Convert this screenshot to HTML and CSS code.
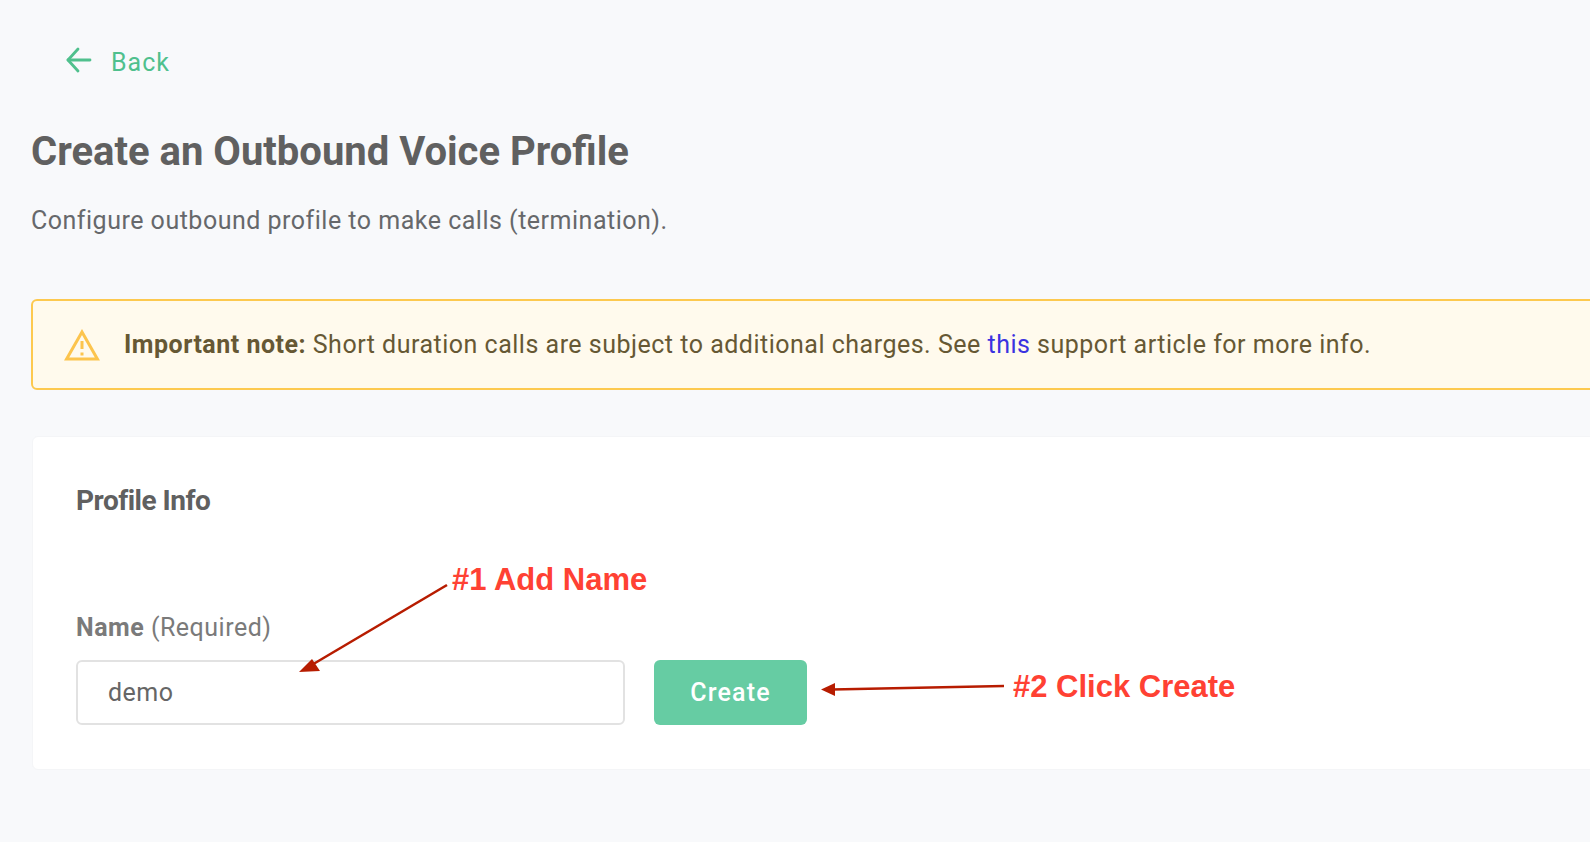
FILE: index.html
```html
<!DOCTYPE html>
<html lang="en">
<head>
    <meta charset="UTF-8">
    <meta name="viewport" content="width=device-width, initial-scale=1.0">
    <title>Create an Outbound Voice Profile</title>
    <link rel="stylesheet" href="styles.css">
</head>
<body>
    <div class="page">
        <a class="back" href="#">
            <svg class="back-icon" viewBox="0 0 26 26" width="26" height="26" fill="none" stroke="#4fc08d" stroke-width="2.8" stroke-linecap="round" stroke-linejoin="round">
                <path d="M24 13H2"/>
                <path d="M12 2L2 13l10 11"/>
            </svg>
            <span>Back</span>
        </a>

        <h1>Create an Outbound Voice Profile</h1>
        <p class="subtitle">Configure outbound profile to make calls (termination).</p>

        <div class="alert">
            <svg class="alert-icon" viewBox="0 0 36 32" width="36" height="32" fill="none" stroke="#fcc44d" stroke-width="3" stroke-linejoin="miter">
                <path d="M18 3L2.6 30h30.8z"/>
                <path d="M18 12v8M18 23.5v3"/>
            </svg>
            <p><strong>Important note:</strong> Short duration calls are subject to additional charges. See <a href="#">this</a> support article for more info.</p>
        </div>

        <div class="card">
            <h2>Profile Info</h2>
            <label class="field-label" for="profileName"><strong>Name</strong> (Required)</label>
            <div class="form-row">
                <input type="text" id="profileName" value="demo">
                <button type="button">Create</button>
            </div>
        </div>
    </div>

    <!-- annotations drawn on top of the screenshot -->
    <div class="note note-one">#1 Add Name</div>
    <div class="note note-two">#2 Click Create</div>
    <svg class="arrows" width="1590" height="842" viewBox="0 0 1590 842">
        <path d="M447 585L310 666" stroke="#b71c00" stroke-width="2.6" fill="none"/>
        <path d="M299 672L312 659L320 671z" fill="#b71c00"/>
        <path d="M1004 686L832 689.5" stroke="#b71c00" stroke-width="2.6" fill="none"/>
        <path d="M821 689.5L835 683V696z" fill="#b71c00"/>
    </svg>
</body>
</html>
```

FILE: styles.css
```css
html, body {
    margin: 0;
    height: 100%;
    overflow: hidden;
}
body {
    position: relative;
    background-color: #f8f9fb;
    font-family: Roboto, Arial, sans-serif;
    color: #606060;
}
.page {
    width: 1700px;
    padding: 42px 0 0 31px;
}
.back {
    display: flex;
    align-items: center;
    margin-left: 35px;
    height: 40px;
    color: #4fc08d;
    font-size: 25px;
    letter-spacing: 1px;
    text-decoration: none;
}
.back-icon {
    margin-right: 19px;
    margin-top: -4px;
}
h1 {
    margin: 46px 0 0;
    font-size: 40px;
    line-height: 48px;
    font-weight: 700;
    color: #606060;
}
.subtitle {
    margin: 30px 0 0;
    font-size: 25px;
    line-height: 30px;
    letter-spacing: 0.5px;
    color: #66686b;
}
.alert {
    display: flex;
    align-items: center;
    box-sizing: border-box;
    height: 91px;
    margin-top: 63px;
    padding-left: 31px;
    background-color: #fffaed;
    border: 2px solid #fdc94f;
    border-radius: 6px;
    font-size: 25px;
    letter-spacing: 0.5px;
    color: #665834;
}
.alert p {
    margin: 0 0 0 24px;
}
.alert a {
    color: #3b32e0;
    text-decoration: none;
}
.card {
    box-sizing: border-box;
    height: 334px;
    margin: 46px 0 0 1px;
    padding: 47px 43px 0;
    background-color: #fff;
    border: 1px solid #f4f5f7;
    border-radius: 6px;
}
h2 {
    margin: 0;
    font-size: 28px;
    line-height: 34px;
    font-weight: 700;
    letter-spacing: -0.5px;
    color: #606060;
}
.field-label {
    display: block;
    margin-top: 95px;
    font-size: 25px;
    line-height: 30px;
    letter-spacing: 0.5px;
    color: #7a7a7a;
}
.form-row {
    display: flex;
    gap: 29px;
    margin-top: 17px;
}
input {
    box-sizing: border-box;
    width: 549px;
    height: 65px;
    padding: 0 30px;
    border: 2px solid #e2e2e2;
    border-radius: 6px;
    background-color: #fff;
    font-family: Roboto, Arial, sans-serif;
    font-size: 25px;
    letter-spacing: 0.5px;
    color: #666;
}
button {
    width: 153px;
    height: 65px;
    border: none;
    border-radius: 6px;
    background-color: #66cca3;
    color: #fff;
    font-family: Roboto, Arial, sans-serif;
    font-size: 25px;
    font-weight: 500;
    letter-spacing: 1.2px;
}
.arrows {
    position: absolute;
    left: 0;
    top: 0;
    pointer-events: none;
}
.note {
    position: absolute;
    font-family: "Liberation Sans", Arial, sans-serif;
    font-size: 31px;
    line-height: 36px;
    font-weight: 700;
    color: #ff4133;
}
.note-one {
    left: 452px;
    top: 562px;
}
.note-two {
    left: 1013px;
    top: 669px;
}
```
